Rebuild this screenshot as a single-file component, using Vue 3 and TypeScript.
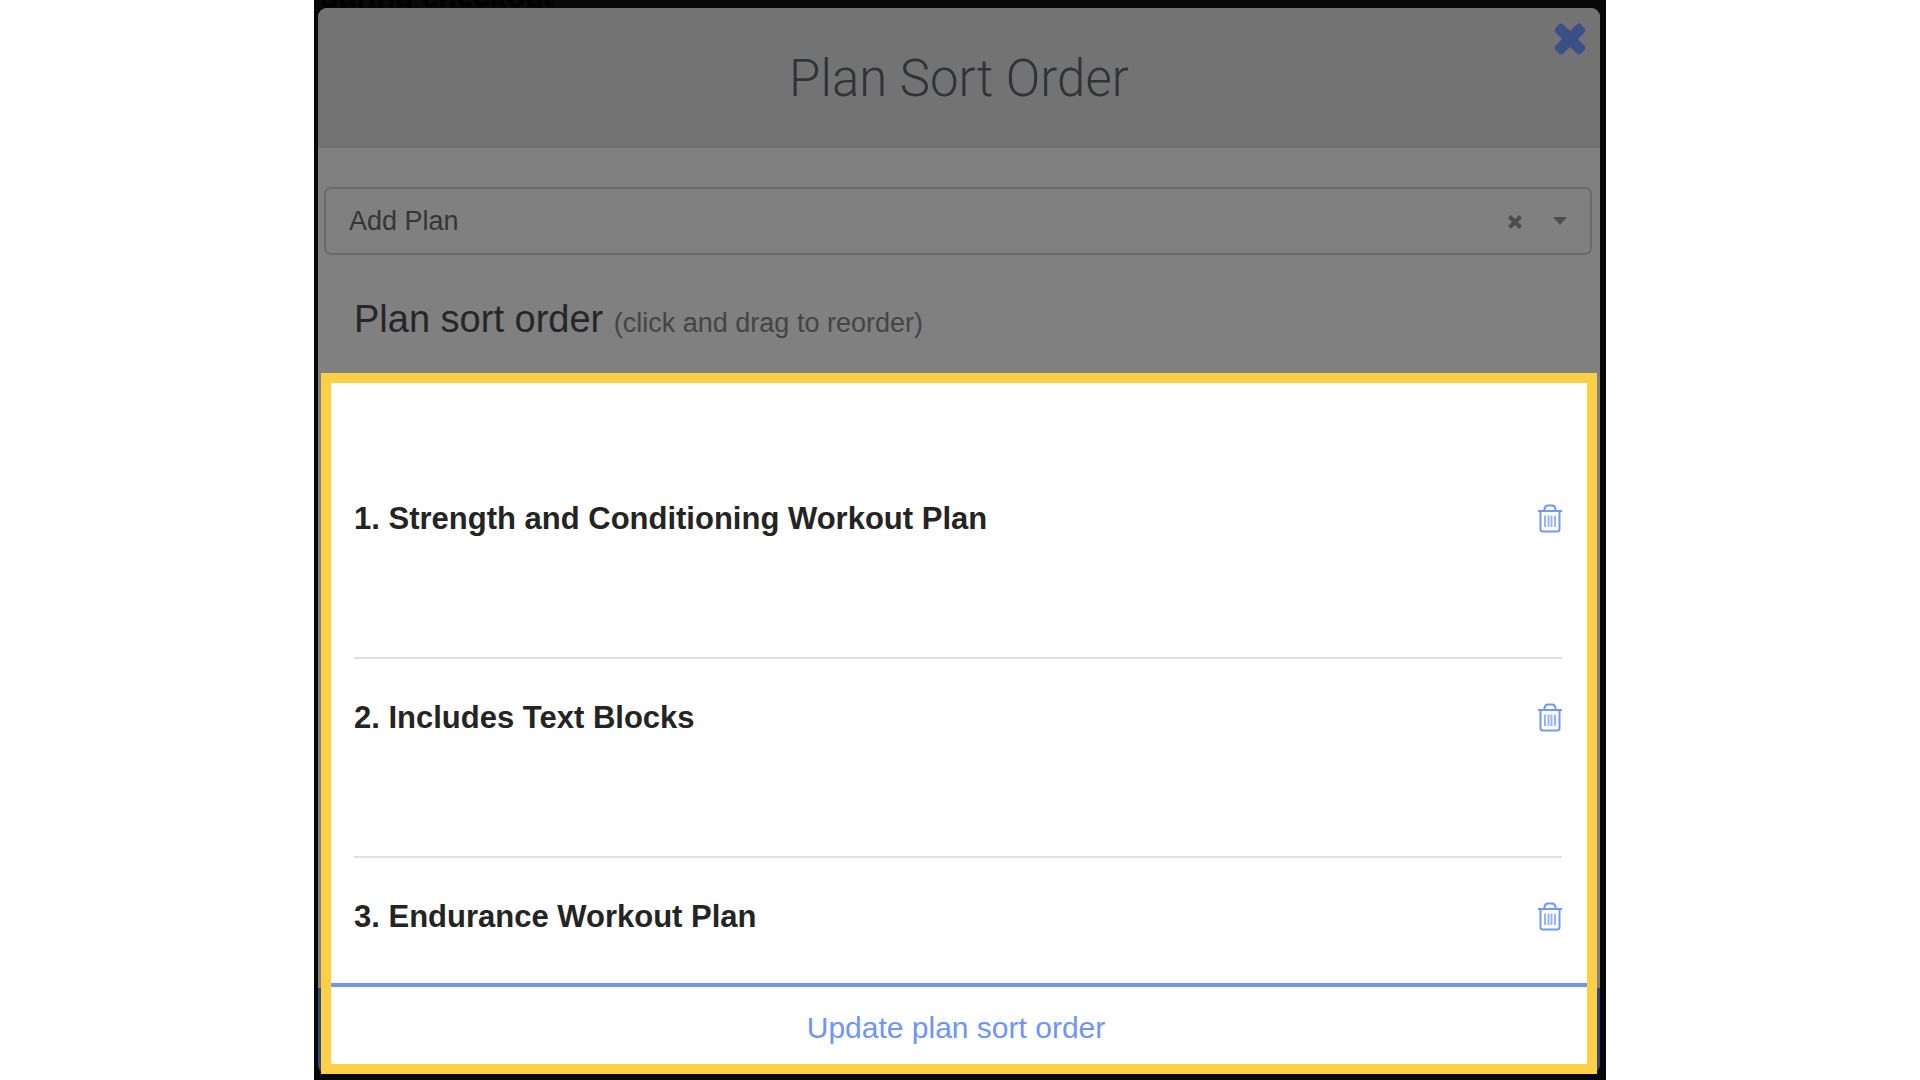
<script setup lang="ts">
import { ref } from 'vue'

const plans = ref<string[]>([
  'Strength and Conditioning Workout Plan',
  'Includes Text Blocks',
  'Endurance Workout Plan',
])
const selected = ref<string>('Add Plan')

function removePlan(index: number): void {
  plans.value.splice(index, 1)
}
</script>

<template>
  <main class="page">
    <div class="backdrop">
      <p class="behind">during checkout</p>
      <section class="modal" aria-labelledby="dialog-title">
        <header class="modal-header">
          <h1 id="dialog-title">Plan Sort Order</h1>
          <button class="close" type="button" aria-label="Close">
            <svg viewBox="0 0 32 32" width="32" height="32">
              <rect x="-2" y="10.500" width="36" height="11" rx="3.500" transform="rotate(45 16 16)" />
              <rect x="-2" y="10.500" width="36" height="11" rx="3.500" transform="rotate(-45 16 16)" />
            </svg>
          </button>
        </header>

        <div class="picker">
          <select v-model="selected" aria-label="Add Plan">
            <option>Add Plan</option>
          </select>
          <button class="clear" type="button" aria-label="Clear">
            <svg viewBox="0 0 14 16" width="14" height="16">
              <path d="M1.500 3.500L12.500 14.500M12.500 3.500L1.500 14.500" />
            </svg>
          </button>
          <svg class="caret" viewBox="0 0 14 8" width="14" height="8" aria-hidden="true">
            <path d="M0 0H14L7 8Z" />
          </svg>
        </div>

        <h2 class="subtitle">
          Plan sort order <small>(click and drag to reorder)</small>
        </h2>

        <div class="highlight">
          <ol class="plans">
            <li v-for="(plan, index) in plans" :key="plan" draggable="true">
              <span>{{ index + 1 }}. {{ plan }}</span>
              <button class="trash" type="button" :aria-label="`Remove ${plan}`" @click="removePlan(index)">
                <svg viewBox="0 0 26 30" width="26" height="30">
                  <path d="M1 8H25M3.500 8V26Q3.500 28.500 6 28.500H20Q22.500 28.500 22.500 26V8M7.500 8V6Q8 2.500 11 2.500H15Q18 2.500 18.500 6V8" />
                  <path class="bars" d="M8 12.500V24M11.500 12.500V24M14.500 12.500V24M18 12.500V24" />
                </svg>
              </button>
            </li>
          </ol>
          <button class="update" type="button">Update plan sort order</button>
        </div>
      </section>
    </div>
  </main>
</template>

<style>
body {
  background: #fff;
}
</style>

<style scoped>
.page {
  padding: 0 314px;
  font-family: "Liberation Sans", Arial, sans-serif;
}

.backdrop {
  position: relative;
  min-height: 100vh;
  box-sizing: border-box;
  padding: 8px 6px 6px 4px;
  background: #080808;
}

.behind {
  position: absolute;
  top: -19px;
  left: 6px;
  margin: 0;
  font-size: 30px;
  line-height: 32px;
  font-weight: 700;
  color: #000;
}

.modal {
  position: relative;
  padding: 0 3px;
  border-radius: 9px;
  background: linear-gradient(to top, #34477f 86px, #808080 86px);
}

button {
  padding: 0;
  border: 0;
  background: none;
  font-family: inherit;
  cursor: pointer;
}

svg {
  display: block;
  fill: none;
}

.modal-header {
  display: flex;
  align-items: center;
  justify-content: center;
  box-sizing: border-box;
  height: 140px;
  margin: 0 -3px;
  padding-top: 4px;
  border-bottom: 2px solid #6e6e6e;
  border-radius: 9px 9px 0 0;
  background: #737373;
}

h1 {
  margin: 0;
  font-family: Roboto, "Liberation Sans", sans-serif;
  font-size: 51px;
  line-height: 60px;
  font-weight: 300;
  color: #2f3436;
}

.close {
  position: absolute;
  top: 15px;
  right: 14px;
}

.close rect {
  fill: #3c4f86;
}

.picker {
  display: flex;
  align-items: center;
  box-sizing: border-box;
  height: 68px;
  margin: 39px 5px 0 3px;
  padding: 0 23px;
  border: 2px solid #6a6a6a;
  border-radius: 7px;
}

select {
  flex: 1;
  padding: 0;
  border: 0;
  appearance: none;
  background: none;
  font-family: inherit;
  font-size: 27px;
  line-height: 32px;
  color: #353535;
}

.clear path {
  stroke: #4c4c4c;
  stroke-width: 4;
}

.caret {
  margin-left: 31px;
  fill: #4c4c4c;
}

.subtitle {
  margin: 41px 33px 26px;
  font-size: 38px;
  line-height: 47px;
  font-weight: 400;
  color: #262626;
}

small {
  font-size: 27px;
  color: #444;
}

.highlight {
  border: 10px solid #ffd045;
  background: #fff;
}

.plans {
  margin: 0;
  padding: 77px 25px 0 23px;
  list-style: none;
}

li {
  display: flex;
  justify-content: space-between;
  align-items: flex-start;
  box-sizing: border-box;
  height: 199px;
  padding-top: 40px;
  border-bottom: 2px solid #e0e0e0;
  font-size: 31px;
  line-height: 38px;
  font-weight: 700;
  color: #242424;
}

li:last-child {
  height: 125px;
  border-bottom: 0;
}

.trash {
  margin-top: 3px;
  margin-right: -1px;
}

.trash path {
  stroke: #7498f5;
  stroke-width: 2;
}

.trash .bars {
  stroke: #9bb4f8;
}

.update {
  display: block;
  width: 100%;
  height: 81px;
  padding: 4px 6px 0 0;
  border-top: 4px solid #7095f2;
  font-size: 30px;
  line-height: 36px;
  color: #7095f2;
}
</style>
